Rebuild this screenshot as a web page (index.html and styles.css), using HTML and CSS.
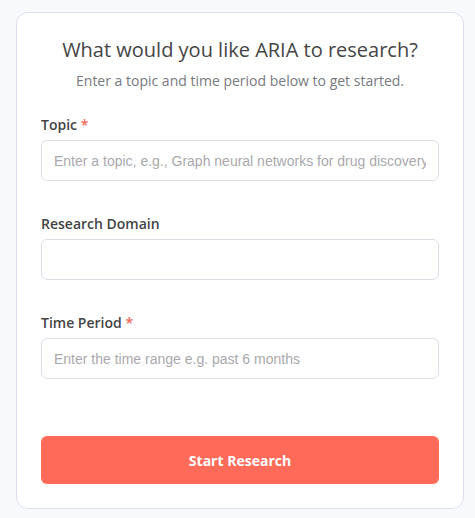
FILE: index.html
```html
<!DOCTYPE html>
<html>
<head>
<meta charset="utf-8">
<link rel="stylesheet" href="styles.css">
</head>
<body>
<div class="page">
  <form class="card">
    <h1 class="title">What would you like ARIA to research?</h1>
    <p class="subtitle">Enter a topic and time period below to get started.</p>
    <div class="field">
      <label class="label">Topic <span class="req">*</span></label>
      <input class="input" type="text" placeholder="Enter a topic, e.g., Graph neural networks for drug discovery">
    </div>
    <div class="field">
      <label class="label">Research Domain</label>
      <input class="input" type="text">
    </div>
    <div class="field">
      <label class="label">Time Period <span class="req">*</span></label>
      <input class="input" type="text" placeholder="Enter the time range e.g. past 6 months">
    </div>
    <button class="btn" type="button">Start Research</button>
  </form>
</div>
</body>
</html>
```
FILE: styles.css
```css
* { box-sizing: border-box; }
html, body { margin: 0; padding: 0; }
body {
  background: #f8f9fd;
  font-family: "Open Sans", "Noto Sans", sans-serif;
}
.page {
  padding: 12px 0 10px 16px;
}
.card {
  width: 448px;
  background: #ffffff;
  border: 1px solid #dde1ec;
  border-radius: 12px;
  padding: 23px 24px 24px 24px;
  display: flex;
  flex-direction: column;
}
.title {
  margin: 0;
  font-size: 20px;
  line-height: 28px;
  font-weight: 400;
  color: #454545;
  text-align: center;
}
.subtitle {
  margin: 7px 0 0 0;
  font-size: 14px;
  line-height: 20px;
  color: #777a80;
  text-align: center;
}
.field {
  display: flex;
  flex-direction: column;
  gap: 5px;
  margin-top: 24px;
}
.field + .field { margin-top: 33px; }
.label {
  font-size: 14px;
  line-height: 20px;
  font-weight: 600;
  color: #444444;
}
.req { color: #f3675a; }
.input {
  width: 100%;
  height: 41px;
  border: 1px solid #dcdfe8;
  border-radius: 6px;
  padding: 0 12px;
  font-family: "Liberation Sans", Arial, sans-serif;
  font-size: 14px;
  color: #333;
  background: #fff;
  outline: none;
}
.input::placeholder { color: #a9a9ad; }
.btn {
  margin-top: 57px;
  height: 48px;
  border: none;
  border-radius: 6px;
  background: #ff6b58;
  color: #ffffff;
  font-family: "Open Sans", "Noto Sans", sans-serif;
  font-size: 14px;
  font-weight: 700;
  cursor: pointer;
}
```
